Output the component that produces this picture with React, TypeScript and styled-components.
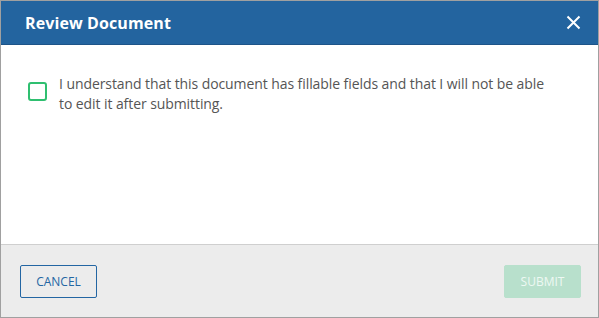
import React from 'react'
import styled, { createGlobalStyle } from 'styled-components'

const GlobalStyle = createGlobalStyle`
    html, body {
        margin: 0;
        padding: 0;
        background: #ffffff;
    }
    body {
        font-family: "Open Sans", "Liberation Sans", sans-serif;
    }
`

const Dialog = styled.div`
    width: 599px;
    height: 318px;
    box-sizing: border-box;
    border: 1px solid #a0a0a0;
    display: flex;
    flex-direction: column;
    background: #ffffff;
`

const Header = styled.div`
    height: 43px;
    flex-shrink: 0;
    background: #23649f;
    border-bottom: 1px solid #1d5488;
    display: flex;
    align-items: center;
    justify-content: space-between;
    padding: 0 15px 0 24px;
`

const Title = styled.div`
    color: #ffffff;
    font-size: 16px;
    font-weight: 700;
    letter-spacing: 0.1px;
`

const CloseButton = styled.button`
    border: none;
    background: transparent;
    padding: 0;
    width: 20px;
    height: 20px;
    display: flex;
    align-items: center;
    justify-content: center;
    cursor: pointer;
`

const Body = styled.div`
    flex: 1;
    padding: 29px 26px 0 26px;
`

const CheckRow = styled.label`
    display: flex;
    align-items: flex-start;
    gap: 12px;
`

const Box = styled.span`
    width: 19px;
    height: 19px;
    box-sizing: border-box;
    border: 2px solid #2fbf70;
    border-radius: 3px;
    flex-shrink: 0;
    margin-top: 8px;
    margin-left: 1px;
`

const CheckText = styled.div`
    font-size: 14px;
    letter-spacing: -0.08px;
    line-height: 20px;
    color: #555555;
    width: 492px;
`

const Footer = styled.div`
    height: 72px;
    flex-shrink: 0;
    background: #ececec;
    border-top: 1px solid #cfcfcf;
    display: flex;
    align-items: center;
    justify-content: space-between;
    padding: 0 17px 0 19px;
`

const Button = styled.button<{ $primary?: boolean }>`
    width: 77px;
    height: 33px;
    box-sizing: border-box;
    border-radius: 2px;
    font-family: "Open Sans", "Liberation Sans", sans-serif;
    font-size: 12px;
    text-transform: uppercase;
    border: 1px solid ${p => (p.$primary ? '#b8e0cc' : '#2366a3')};
    background: ${p => (p.$primary ? '#b8e0cc' : 'transparent')};
    color: ${p => (p.$primary ? '#eef8f3' : '#2366a3')};
    padding: 0;
    cursor: pointer;
`

const App: React.FunctionComponent = () => {
    return (
        <>
            <GlobalStyle />
            <Dialog>
                <Header>
                    <Title>Review Document</Title>
                    <CloseButton aria-label="close">
                        <svg width="15" height="15" viewBox="0 0 15 15">
                            <path d="M1.5 1.5 L13.5 13.5 M13.5 1.5 L1.5 13.5" stroke="#ffffff" strokeWidth="2" />
                        </svg>
                    </CloseButton>
                </Header>
                <Body>
                    <CheckRow>
                        <Box />
                        <CheckText>
                            I understand that this document has fillable fields and that I will not be able to edit it after submitting.
                        </CheckText>
                    </CheckRow>
                </Body>
                <Footer>
                    <Button>Cancel</Button>
                    <Button $primary disabled>Submit</Button>
                </Footer>
            </Dialog>
        </>
    )
}

export default App
